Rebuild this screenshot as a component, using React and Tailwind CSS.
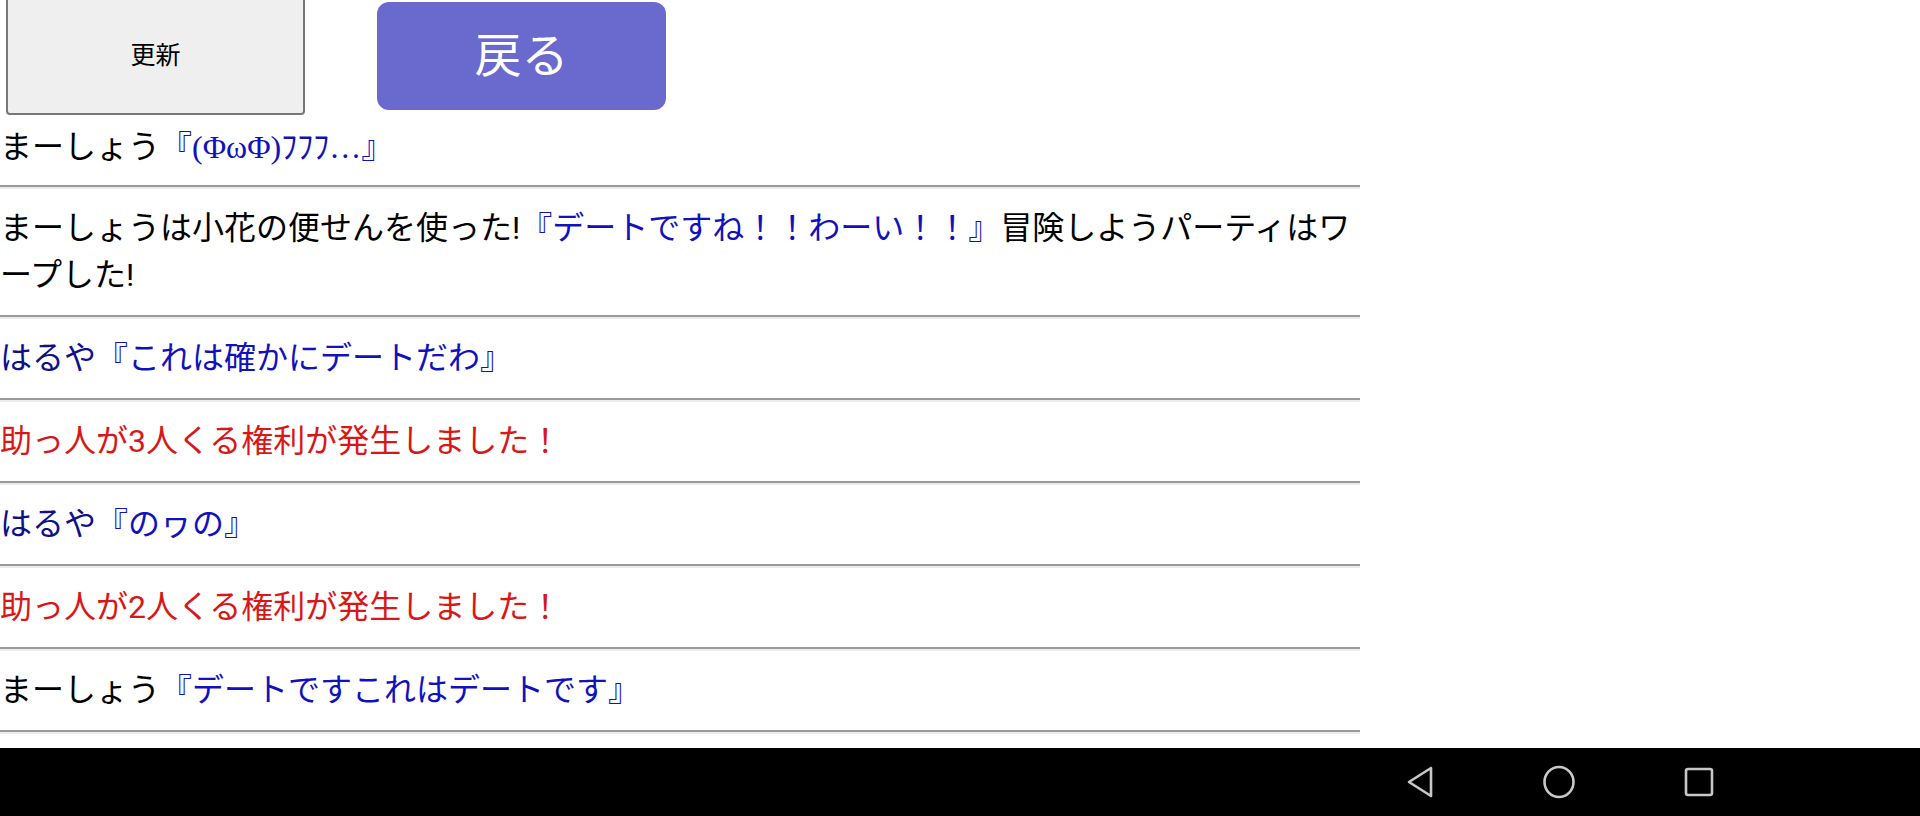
import React from "react";

const Hr = () => (
  <div className="h-[4px] w-[1360px] border-t-2 border-b-2 border-t-[#9a9a9a] border-b-[#ececec]" />
);

const Row = ({ children, className = "" }) => (
  <>
    <div className={"w-[1360px] py-4 " + className}>{children}</div>
    <Hr />
  </>
);

const Blue = ({ children }) => <span className="text-[#1212bc]">{children}</span>;

export default function App() {
  return (
    <div
      className="flex h-[816px] w-[1920px] flex-col overflow-hidden bg-white text-black"
      style={{ fontFamily: 'Roboto, "Noto Sans CJK JP", sans-serif' }}
    >
      <div className="flex-1 overflow-hidden">
        <div className="flex items-start">
          <button className="ml-[6px] -mt-[4px] flex h-[119px] w-[299px] items-center justify-center rounded-[4px] border-2 border-[#777777] bg-[#efefef] text-[25px] text-black">
            更新
          </button>
          <button className="ml-[72px] mt-[2px] flex h-[108px] w-[289px] items-center justify-center rounded-[12px] bg-[#6a69cd] text-[47px] text-white">
            戻る
          </button>
        </div>
        <div className="text-[32px] leading-[47px]">
          <div className="w-[1360px] pt-[9px] pb-[14px]">
            まーしょう
            <Blue>
              『<span style={{ fontFamily: '"Liberation Serif", "Noto Sans CJK JP", serif' }}>(ΦωΦ)ﾌﾌﾌ…</span>』
            </Blue>
          </div>
          <Hr />
          <Row>
            まーしょうは小花の便せんを使った!<Blue>『デートですね！！わーい！！』</Blue>冒険しようパーティはワ<br />ープした!
          </Row>
          <Row className="text-[#10108a]">
            はるや<Blue>『これは確かにデートだわ』</Blue>
          </Row>
          <Row className="text-[#d81818]">助っ人が3人くる権利が発生しました！</Row>
          <Row className="text-[#10108a]">
            はるや<Blue>『のヮの』</Blue>
          </Row>
          <Row className="text-[#d81818]">助っ人が2人くる権利が発生しました！</Row>
          <Row>
            まーしょう<Blue>『デートですこれはデートです』</Blue>
          </Row>
        </div>
      </div>
      <div className="flex h-[68px] items-center bg-black">
        <div className="ml-[1404px] flex h-[34px] w-[32px] items-center justify-center">
          <svg width="30" height="34" viewBox="0 0 30 34" fill="none" stroke="#c8c8c8" strokeWidth="2.6" strokeLinejoin="round">
            <path d="M26 3 L4 17 L26 31 Z" />
          </svg>
        </div>
        <div className="ml-[106px] flex h-[34px] w-[34px] items-center justify-center">
          <svg width="34" height="34" viewBox="0 0 34 34" fill="none" stroke="#c8c8c8" strokeWidth="2.6">
            <ellipse cx="17" cy="17" rx="14.5" ry="15" />
          </svg>
        </div>
        <div className="ml-[108px] flex h-[34px] w-[30px] items-center justify-center">
          <svg width="30" height="30" viewBox="0 0 30 30" fill="none" stroke="#c8c8c8" strokeWidth="2.6">
            <rect x="2" y="2" width="26" height="26" rx="2" />
          </svg>
        </div>
      </div>
    </div>
  );
}
